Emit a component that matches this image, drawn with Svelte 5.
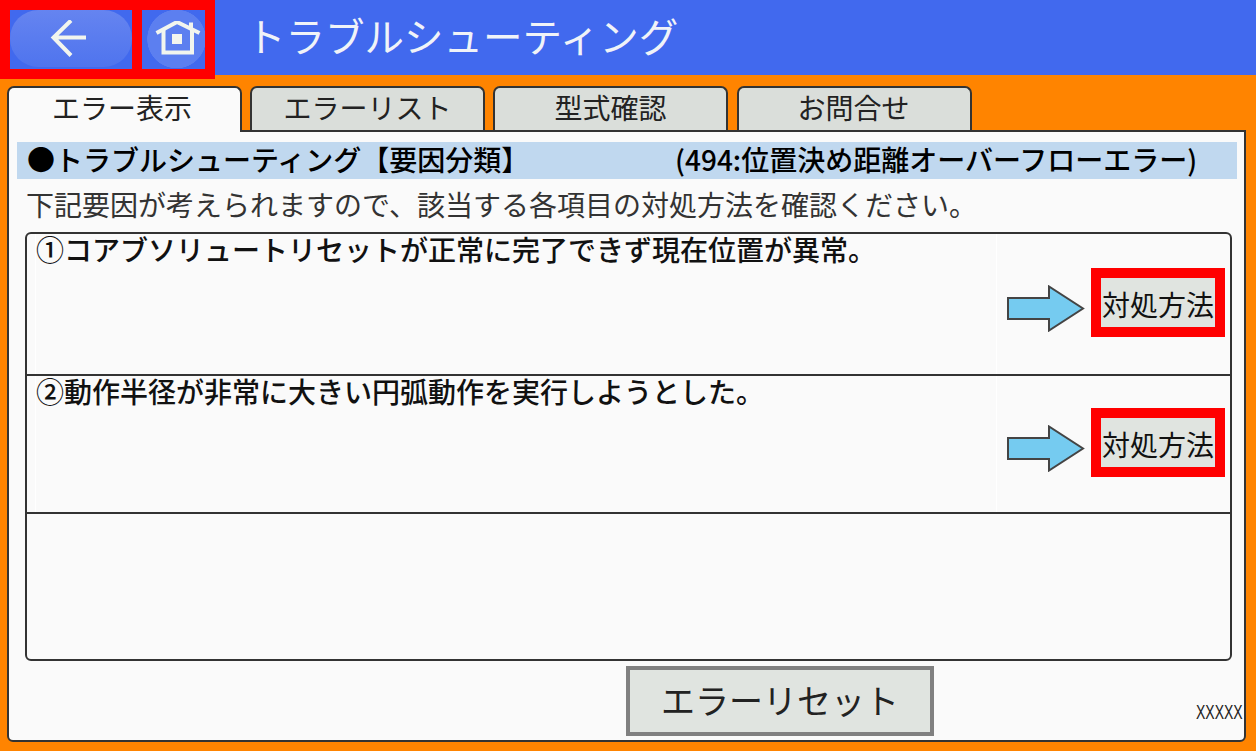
<script>
const tabs = ['エラー表示', 'エラーリスト', '型式確認', 'お問合せ'];
const causes = [
  '①コアブソリュートリセットが正常に完了できず現在位置が異常。',
  '②動作半径が非常に大きい円弧動作を実行しようとした。'
];
</script>

<div class="screen">
  <header>
    <nav>
      <button class="back" aria-label="戻る">
        <span class="pill">
          <svg width="40" height="40" viewBox="0 0 40 40">
            <path d="M37 17.500H4M22 0.500L4.500 17.500L22 35.500" fill="none" stroke="#f2f5ee" stroke-width="4" />
          </svg>
        </span>
      </button>
      <button class="home" aria-label="ホーム">
        <svg width="46" height="38" viewBox="0 0 46 38">
          <path d="M1.500 12L22 1L44.500 12M36 1.500V8" fill="none" stroke="#f2f5ee" stroke-width="4" />
          <path d="M8.500 9V31.500H37V9" fill="none" stroke="#f2f5ee" stroke-width="4" />
          <rect x="17" y="13" width="10" height="10" fill="#f2f5ee" />
        </svg>
      </button>
    </nav>
    <h1>トラブルシューティング</h1>
  </header>

  <div class="tabs">
    {#each tabs as tab, i}
      <div class="tab" class:active={i === 0}>{tab}</div>
    {/each}
  </div>

  <main>
    <div class="heading">
      <span class="heading-left">●トラブルシューティング【要因分類】</span>
      <span class="heading-right">(494:位置決め距離オーバーフローエラー)</span>
    </div>
    <p class="lead">下記要因が考えられますので、該当する各項目の対処方法を確認ください。</p>

    <div class="table">
      {#each causes as cause}
        <div class="row">
          <div class="cause">{cause}</div>
          <div class="action">
            <svg class="arrow" width="78" height="47" viewBox="0 0 78 47">
              <path d="M1 13H42V1.500L76 23.500L42 45.500V34H1Z" fill="#75cbf0" stroke="#444" stroke-width="2" />
            </svg>
            <button class="remedy">対処方法</button>
          </div>
        </div>
      {/each}
      <div class="row-empty"></div>
    </div>

    <div class="footer">
      <button class="reset">エラーリセット</button>
      <span class="code">XXXXX</span>
    </div>
  </main>
</div>

<style>
:global(body) {
  margin: 0;
}

.screen {
  background-color: #ff8400;
  box-sizing: border-box;
  display: flex;
  flex-direction: column;
  font-family: "Noto Sans CJK JP", "Liberation Sans", sans-serif;
  height: 751px;
  overflow: hidden;
  padding-bottom: 9px;
  width: 1256px;
}

button {
  font-family: inherit;
  margin: 0;
  padding: 0;
}

header {
  align-items: flex-start;
  background-color: #4169ee;
  display: flex;
  flex: none;
  height: 75px;
}

nav {
  background-color: #ff0000;
  box-sizing: border-box;
  display: flex;
  flex: none;
  gap: 10px;
  height: 79px;
  padding: 10px;
  position: relative;
  width: 215px;
}

.back,
.home {
  align-items: center;
  background-color: #4169ee;
  border: none;
  display: flex;
  height: 59px;
  justify-content: center;
}

.back {
  align-items: flex-start;
  width: 122px;
}

.pill {
  align-items: flex-start;
  background: linear-gradient(#6584f0, #4f74ee);
  border-radius: 29px;
  box-sizing: border-box;
  display: flex;
  height: 57px;
  justify-content: center;
  padding-top: 9.500px;
  width: 122px;
}

.pill svg {
  margin-left: -4px;
}

.home {
  background: radial-gradient(circle at 34.500px 29px, #5c7ff0 0 29px, #4169ee 29.500px);
  width: 63px;
}

.home svg {
  margin-left: 9px;
}

h1 {
  color: #f0f3f8;
  font-size: 39.500px;
  font-weight: 400;
  line-height: 69px;
  margin: 0 0 0 31px;
  white-space: nowrap;
}

.tabs {
  display: flex;
  flex: none;
  gap: 8px;
  height: 44px;
  margin-top: 11px;
  padding-left: 7px;
  position: relative;
  z-index: 1;
}

.tab {
  background-color: #dadeda;
  border: 2px solid #333;
  border-bottom: none;
  border-radius: 7px 7px 0 0;
  box-sizing: border-box;
  color: #222;
  font-size: 28px;
  height: 44px;
  line-height: 39px;
  text-align: center;
  width: 235px;
}

.tab:nth-child(4) {
  margin-left: 1px;
  padding-right: 2px;
}

.tab.active {
  background-color: #fafafa;
  height: 46px;
  padding-right: 5px;
}

main {
  background-color: #fafafa;
  border: 2px solid #333;
  border-radius: 0 0 6px 6px;
  box-sizing: border-box;
  display: flex;
  flex: 1;
  flex-direction: column;
  margin-left: 7px;
  margin-right: 10px;
  padding: 10px 8px 0 8px;
}

.heading {
  background-color: #c0d8ef;
  color: #000;
  display: flex;
  flex: none;
  font-size: 28px;
  font-weight: 500;
  height: 37px;
  line-height: 35px;
  margin-right: -1px;
  white-space: nowrap;
}

.heading-left {
  box-sizing: border-box;
  padding-left: 10px;
  width: 658px;
}

.lead {
  color: #333;
  font-size: 28px;
  height: 53px;
  line-height: 51px;
  margin: 0;
  padding-left: 9px;
  white-space: nowrap;
}

.table {
  border: 2px solid #333;
  border-radius: 6px;
  box-sizing: border-box;
  display: flex;
  flex: none;
  flex-direction: column;
  height: 429px;
  margin-left: 8px;
  margin-right: 4px;
}

.row {
  border-bottom: 2px solid #333;
  box-sizing: border-box;
  display: flex;
  flex: none;
}

.row:nth-child(1) {
  height: 142px;
}

.row:nth-child(2) {
  height: 138px;
}

.cause {
  border-left: 1px solid #fff;
  border-right: 1px solid #fff;
  box-sizing: border-box;
  color: #111;
  flex: none;
  font-size: 28px;
  font-weight: 500;
  height: 100%;
  line-height: 30px;
  margin-left: 8px;
  white-space: nowrap;
  width: 962px;
}

.action {
  align-items: center;
  display: flex;
  flex: 1;
  padding-bottom: 4px;
  padding-left: 10px;
}

.arrow {
  flex: none;
  margin-top: 13px;
}

.remedy {
  background-color: #e0e4e0;
  border: 10px solid #ff0000;
  box-sizing: border-box;
  color: #111;
  flex: none;
  font-size: 28px;
  height: 69px;
  margin-left: 6px;
  padding-top: 3px;
  width: 134px;
  white-space: nowrap;
}

.row-empty {
  flex: 1;
}

.footer {
  align-items: flex-start;
  display: flex;
  flex: none;
  margin-top: 5px;
  padding-left: 609px;
}

.reset {
  background-color: #e0e4e0;
  border: 4px solid #808080;
  box-sizing: border-box;
  color: #222;
  flex: none;
  font-size: 34px;
  height: 70px;
  padding-bottom: 3px;
  width: 308px;
}

.code {
  color: #222;
  flex: none;
  font-family: "Liberation Sans", sans-serif;
  font-size: 20px;
  line-height: 20px;
  margin-left: 262px;
  margin-top: 36px;
  transform: scaleX(0.7);
  transform-origin: left;
  white-space: nowrap;
}
</style>
